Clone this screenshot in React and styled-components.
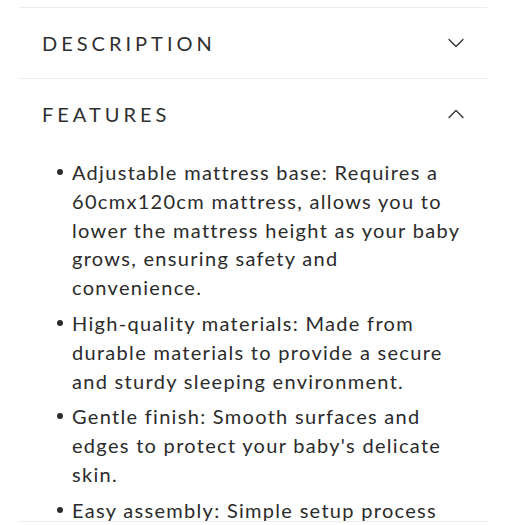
import styled, { createGlobalStyle } from 'styled-components';

const GlobalStyle = createGlobalStyle`
  html, body {
    margin: 0;
    padding: 0;
    background: #fff;
  }
  body {
    font-family: Lato, 'Open Sans', sans-serif;
    color: #2f2f2f;
  }
`;

const Wrapper = styled.div`
  padding: 7px 25px 0 19px;
  height: 525px;
  box-sizing: border-box;
  overflow: hidden;
`;

const Section = styled.section`
  border-top: 1.5px solid #ececec;
`;

const Header = styled.div`
  height: 70px;
  padding: 0 23px;
  display: flex;
  align-items: center;
  justify-content: space-between;
  cursor: pointer;
`;

const Title = styled.h3`
  margin: 0;
  font-size: 20px;
  font-weight: 400;
  letter-spacing: 4px;
  color: #2f2f2f;
`;

const Chevron = styled.svg`
  width: 16px;
  height: 10px;
  transform: ${({ $open }) => ($open ? 'rotate(180deg)' : 'none')};
`;

const List = styled.ul`
  list-style: none;
  margin: 0;
  padding: 9px 17px 0 38px;
`;

const Item = styled.li`
  display: grid;
  grid-template-columns: 15px 1fr;
  font-size: 20px;
  line-height: 28.8px;
  letter-spacing: 1.3px;
  color: #2b2b2b;

  & + & {
    margin-top: 7px;
  }
`;

const Bullet = styled.span`
  width: 6px;
  height: 6px;
  margin-top: 11px;
  border-radius: 50%;
  background: #2b2b2b;
`;

const BottomBar = styled.div`
  position: fixed;
  left: 19px;
  right: 25px;
  bottom: 0;
  height: 3px;
  background: #fff;
  border-top: 1.5px solid #ececec;
`;

const features = [
  'Adjustable mattress base: Requires a 60cmx120cm mattress, allows you to lower the mattress height as your baby grows, ensuring safety and convenience.',
  'High-quality materials: Made from durable materials to provide a secure and sturdy sleeping environment.',
  "Gentle finish: Smooth surfaces and edges to protect your baby's delicate skin.",
  'Easy assembly: Simple setup process with clear instructions included.',
];

function Arrow({ open }) {
  return (
    <Chevron $open={open} viewBox="0 0 16 10" fill="none">
      <polyline
        points="1,1.5 8,8.5 15,1.5"
        stroke="#2f2f2f"
        strokeWidth="1.3"
        strokeLinecap="round"
        strokeLinejoin="round"
      />
    </Chevron>
  );
}

export default function App() {
  return (
    <>
      <GlobalStyle />
      <Wrapper>
        <Section>
          <Header>
            <Title>DESCRIPTION</Title>
            <Arrow />
          </Header>
        </Section>
        <Section>
          <Header>
            <Title>FEATURES</Title>
            <Arrow open />
          </Header>
          <List>
            {features.map((text) => (
              <Item key={text}>
                <Bullet />
                <span>{text}</span>
              </Item>
            ))}
          </List>
        </Section>
      </Wrapper>
      <BottomBar />
    </>
  );
}
